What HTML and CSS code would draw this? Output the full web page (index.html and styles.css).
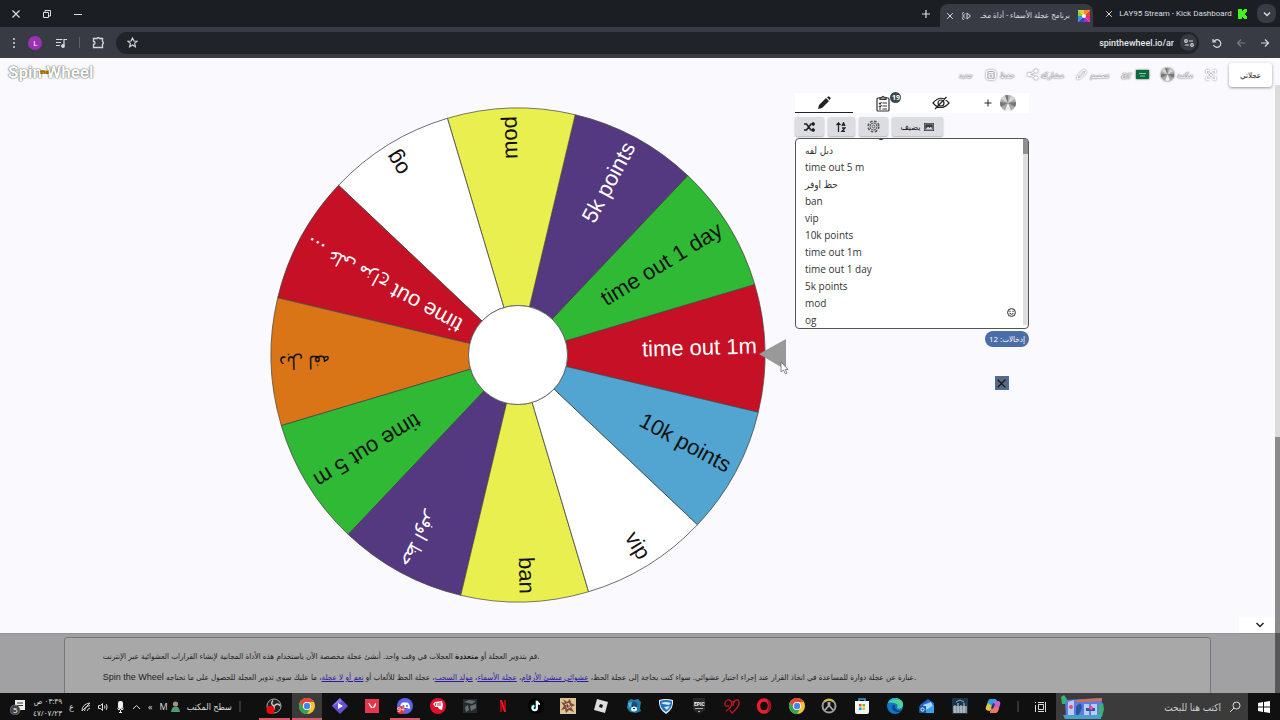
FILE: index.html
```html
<!DOCTYPE html>
<html lang="ar">

<head>
    <meta charset="UTF-8">
    <meta name="viewport" content="width=device-width, initial-scale=1.0">
    <title>برنامج عجلة الأسماء</title>
    <link rel="stylesheet" href="styles.css">
</head>

<body>
    <!-- Shared icons -->
    <svg class="defs" width="0" height="0" aria-hidden="true">
        <defs>
            <path id="slice" d="M47.8-12.8L238.6-63.9A247 247 0 0 1 238.6 63.9L47.8 12.8A49.5 49.5 0 0 0 47.8-12.8Z" />
            <symbol id="chrome" viewBox="0 0 20 20">
                <circle cx="10" cy="10" r="10" fill="#f9c32d" />
                <path d="M1.3 5A10 10 0 0 1 18.7 5H10A5 5 0 0 0 5.7 12.5Z" fill="#e4453a" />
                <path d="M1.3 5A10 10 0 0 0 10 20L14.3 12.5A5 5 0 0 1 5.7 12.5Z" fill="#35a354" />
                <circle cx="10" cy="10" r="5" fill="#fff" />
                <circle cx="10" cy="10" r="4" fill="#4285f4" />
            </symbol>
            <symbol id="ball" viewBox="0 0 16 16">
                <circle cx="8" cy="8" r="8" fill="#aaa" />
                <path d="M8 8L1 4A8 8 0 0 1 5 .6ZM8 8L11 .6A8 8 0 0 1 15 4Z" fill="#d5d5d5" />
                <path d="M8 8L1 12A8 8 0 0 1 0 7ZM8 8L16 7A8 8 0 0 1 15 12Z" fill="#777" />
                <path d="M8 8L5 15.4A8 8 0 0 0 11 15.4Z" fill="#eee" />
                <path d="M8 8L5 .6A8 8 0 0 1 8 0Z" fill="#777" />
            </symbol>
            <symbol id="close" viewBox="0 0 10 10">
                <path d="M1.5 1.5L8.5 8.5M8.5 1.5L1.5 8.5" fill="none" stroke="currentColor" stroke-width="1.2" />
            </symbol>
        </defs>
    </svg>

    <div class="tab-strip">
        <div class="window-controls">
            <button aria-label="إغلاق"><svg width="10" height="10"><use href="#close" /></svg></button>
            <button aria-label="استعادة"><svg width="10" height="10" fill="none" stroke="currentColor"><path d="M1.5 3.5H6.5V8.5H1.5ZM3 3V1.5H8.5V7H7" /></svg></button>
            <button aria-label="تصغير"><svg width="10" height="10" stroke="currentColor"><path d="M1 5.5H9" /></svg></button>
        </div>
        <button class="new-tab" aria-label="علامة تبويب جديدة"><svg width="10" height="10" stroke="currentColor" stroke-width="1.2"><path d="M5 1V9M1 5H9" /></svg></button>
        <div class="tab active">
            <svg width="8" height="8"><use href="#close" /></svg>
            <svg width="10" height="10" viewBox="0 0 10 10" fill="none" stroke="currentColor"><path d="M5 2V8L8.5 5ZM3 2.5A3 3 0 0 0 3 7.5M1.7 1A5 5 0 0 0 1.7 9" /></svg>
            <span class="tab-title" dir="rtl">برنامج عجلة الأسماء - أداة مخـ</span>
            <svg width="12" height="12" viewBox="0 0 12 12">
                <path d="M0 0H12V12H0Z" fill="#fff" />
                <path d="M6 6L6 0H0Z" fill="#f0cf30" /><path d="M6 6L0 0V6Z" fill="#8fce38" /><path d="M6 6H0V12Z" fill="#2b9be0" /><path d="M6 6L0 12H6Z" fill="#4040c0" />
                <path d="M6 6V12H12Z" fill="#a52cc5" /><path d="M6 6L12 12V6Z" fill="#ea2886" /><path d="M6 6H12V0Z" fill="#ee3b30" /><path d="M6 6L12 0H6Z" fill="#f28b27" />
                <circle cx="6" cy="6" r="2" fill="#fff" />
            </svg>
        </div>
        <div class="tab">
            <svg width="8" height="8"><use href="#close" /></svg>
            <span class="tab-title">LAY95 Stream - Kick Dashboard</span>
            <svg width="9" height="10" viewBox="0 0 9 10"><path d="M0 0H4V2H5V1H6V0H9V3H8V4H7V6H8V7H9V10H6V9H5V8H4V10H0Z" fill="#40f51d" /></svg>
        </div>
        <button class="tab-search" aria-label="البحث في علامات التبويب"><svg width="8" height="8" fill="none" stroke="currentColor" stroke-width="1.4"><path d="M1 2.5L4 5.5L7 2.5" /></svg></button>
    </div>

    <div class="toolbar">
        <div class="toolbar-icons">
            <button aria-label="المزيد"><svg width="4" height="12" fill="currentColor"><circle cx="2" cy="2" r="1" /><circle cx="2" cy="6" r="1" /><circle cx="2" cy="10" r="1" /></svg></button>
            <button class="profile">L</button>
            <button aria-label="الوسائط"><svg width="12" height="10" fill="none" stroke="currentColor" stroke-width="1.2"><path d="M1 1.5H7.5M1 4.5H6M1 7.5H5M9 7.5V1.5H12" /><circle cx="8" cy="8" r="1.3" fill="currentColor" /></svg></button>
            <span class="divider"></span>
            <button aria-label="الإضافات"><svg width="13" height="13" fill="none" stroke="currentColor" stroke-width="1.3"><path d="M1.5 2.5H5A1.3 1.3 0 0 1 7.5 2.5H10.5V5.5A1.3 1.3 0 0 1 10.5 8V11.5H1.5V8.5A1.5 1.5 0 0 0 1.5 5.5Z" /></svg></button>
        </div>
        <div class="address-bar">
            <svg width="11" height="11" viewBox="0 0 12 12" fill="none" stroke="currentColor" stroke-width="1.2"><path d="M6 1L7.5 4.4L11 4.7L8.3 7L9.2 10.7L6 8.7L2.8 10.7L3.7 7L1 4.7L4.5 4.4Z" /></svg>
            <input type="text" value="spinthewheel.io/ar" aria-label="العنوان">
            <span class="site-info"><svg width="10" height="8" fill="none" stroke="currentColor" stroke-width="1.2"><circle cx="2" cy="2" r="1.3" /><circle cx="8" cy="6" r="1.3" /><path d="M5 2H9M1 6H5" /></svg></span>
        </div>
        <div class="nav-buttons">
            <button aria-label="إعادة التحميل"><svg width="10" height="10" fill="none" stroke="currentColor" stroke-width="1.2"><path d="M1 1V4H4M1.5 4A3.8 3.8 0 1 1 1.5 7" /></svg></button>
            <button class="dim" aria-label="للأمام"><svg width="10" height="10" fill="none" stroke="currentColor" stroke-width="1.2"><path d="M9 5H1.5M5 1.5L1.5 5L5 8.5" /></svg></button>
            <button aria-label="رجوع"><svg width="10" height="10" fill="none" stroke="currentColor" stroke-width="1.2"><path d="M1 5H8.5M5 1.5L8.5 5L5 8.5" /></svg></button>
        </div>
    </div>

    <div class="viewport">
        <main class="page">
            <section class="stage">
                <header class="site-header">
                    <a class="logo" href="#">Spin Wheel<span class="logo-the">the</span></a>
                    <nav class="site-nav">
                        <a href="#">جديد</a>
                        <a href="#"><svg width="12" height="12" fill="none" stroke="currentColor"><rect x="1.5" y="1.5" width="9" height="9" rx="2" /><circle cx="6" cy="7" r="2" /><path d="M4 3.5H8" /></svg>حفظ</a>
                        <a href="#"><svg width="11" height="11" fill="currentColor" stroke="currentColor"><path d="M9 2L2 5.5L9 9" fill="none" /><circle cx="9" cy="2" r="1.3" /><circle cx="2" cy="5.5" r="1.3" /><circle cx="9" cy="9" r="1.3" /></svg>مشاركة</a>
                        <a href="#"><svg width="11" height="11" fill="none" stroke="currentColor"><path d="M1 10L2 6.5L7 1.5Q9 .5 10 2.5L9 4.5L4.5 9Z" /></svg>تصميم</a>
                        <a class="lang" href="#">ar<svg width="13" height="9"><path d="M0 0H13V9H0Z" fill="#0b6b3c" /><path d="M3 3.5H10M4 6H9" stroke="#8cc3a5" /></svg></a>
                        <a href="#"><svg width="13" height="13"><use href="#ball" /></svg>مكتبة</a>
                        <a href="#" aria-label="ملء الشاشة"><svg width="12" height="12" fill="none" stroke="currentColor"><path d="M1.5 4V1.5H4M8 1.5H10.5V4M10.5 8V10.5H8M4 10.5H1.5V8M4 4L8 8M8 4L4 8" /></svg></a>
                        <button class="my-wheels">عجلاتي</button>
                    </nav>
                </header>

                <div class="wheel-area">
                    <svg class="wheel" width="520" height="496" viewBox="-248 -248 520 496" role="img" aria-label="عجلة">
                        <g stroke="#444" stroke-width="0.7">
                            <use href="#slice" transform="rotate(-1.6)" fill="#c51025" />
                            <use href="#slice" transform="rotate(-31.6)" fill="#30b935" />
                            <use href="#slice" transform="rotate(-61.6)" fill="#543880" />
                            <use href="#slice" transform="rotate(-91.6)" fill="#e8ef4f" />
                            <use href="#slice" transform="rotate(-121.6)" fill="#fff" />
                            <use href="#slice" transform="rotate(-151.6)" fill="#c51025" />
                            <use href="#slice" transform="rotate(-181.6)" fill="#da7517" />
                            <use href="#slice" transform="rotate(-211.6)" fill="#30b935" />
                            <use href="#slice" transform="rotate(-241.6)" fill="#543880" />
                            <use href="#slice" transform="rotate(-271.6)" fill="#e8ef4f" />
                            <use href="#slice" transform="rotate(-301.6)" fill="#fff" />
                            <use href="#slice" transform="rotate(-331.6)" fill="#52a5d0" />
                            <circle r="49.5" fill="#fff" />
                        </g>
                        <g class="labels">
                            <text class="light" x="239" y="5" transform="rotate(-1.6)">time out 1m</text>
                            <text x="239" y="5" transform="rotate(-31.6)">time out 1 day</text>
                            <text class="light" x="239" y="5" transform="rotate(-61.6)">5k points</text>
                            <text x="239" y="5" transform="rotate(-91.6)">mod</text>
                            <text x="239" y="5" transform="rotate(-121.6)">og</text>
                            <text class="light" x="239" y="5" transform="rotate(-151.6)">time out <tspan class="arabic">على مزاج</tspan> ...</text>
                            <text class="arabic" x="239" y="5" transform="rotate(-181.6)">دبل لفه</text>
                            <text x="239" y="5" transform="rotate(-211.6)">time out 5 m</text>
                            <text class="light arabic" x="239" y="5" transform="rotate(-241.6)">حظ اوفر</text>
                            <text x="239" y="5" transform="rotate(-271.6)">ban</text>
                            <text x="239" y="5" transform="rotate(-301.6)">vip</text>
                            <text x="239" y="5" transform="rotate(-331.6)">10k points</text>
                        </g>
                        <path d="M241-1L268-16V15Z" fill="#999" />
                        <path d="M263 7V17L265.5 15L267.5 19L269 18L267.3 14.5H270Z" fill="#fff" stroke="#555" stroke-width="0.7" />
                    </svg>

                    <aside class="panel">
                        <div class="panel-tabs">
                            <button class="selected" aria-label="تعديل"><svg width="14" height="14" viewBox="0 0 14 14"><path d="M1 13L2 9L9 2L12 5L5 12ZM10 1.3L11 .6Q12 0 13.3 1.3Q14 2.5 13 3.4L12.5 4Z" fill="#222" /></svg></button>
                            <button aria-label="النتائج"><svg width="14" height="17" viewBox="0 0 14 17" fill="none" stroke="#333" stroke-width="1.2"><rect x="1" y="3" width="12" height="13" rx="1" /><path d="M4 4.5V2.5H5.5Q7 0 8.5 2.5H10V4.5ZM3 8L4 9L5.5 7M6.5 8H11M3 11L4 12L5.5 10M6.5 11H11M3 14H5M6.5 14H11" /></svg><span class="count">19</span></button>
                            <button aria-label="إخفاء"><svg width="18" height="14" viewBox="0 0 18 14" fill="none" stroke="#222" stroke-width="1.2"><path d="M1 7Q9-2.5 17 7Q9 16 1 7ZM3 13L14.5 1" /><circle cx="9" cy="7" r="3" /></svg></button>
                            <button class="add" aria-label="إضافة"><svg width="8" height="8" stroke="#222"><path d="M4 .5V7.5M.5 4H7.5" /></svg><svg width="16" height="16"><use href="#ball" /></svg></button>
                        </div>
                        <div class="tools">
                            <button aria-label="خلط"><svg width="11" height="10" viewBox="0 0 11 10" fill="none" stroke="#222" stroke-width="1.6"><path d="M0 2H2.5L7 8H10M0 8H2.5L7 2H10M8.5 .3L10.3 2L8.5 3.7M8.5 6.3L10.3 8L8.5 9.7" /></svg></button>
                            <button class="narrow" aria-label="ترتيب"><svg width="10" height="10" viewBox="0 0 10 10" fill="none" stroke="#222" stroke-width="1.3"><path d="M2.5 10V1M.5 3L2.5 1L4.5 3M6 4L7.5 .8L9 4M6.3 3H8.7M6 6H9L6 9.3H9" /></svg></button>
                            <button aria-label="إعدادات"><svg width="13" height="13" viewBox="0 0 13 13" fill="none" stroke="#555" stroke-width="0.9"><circle cx="6.5" cy="6.5" r="1.5" /><circle cx="6.5" cy="6.5" r="3.5" /><circle cx="6.5" cy="6.5" r="5.3" stroke-width="1.6" stroke-dasharray="2.6 1.56" /></svg></button>
                            <button class="wide">يضيف<svg width="10" height="8"><path d="M0 0H10V8H0Z" fill="#333" /><path d="M1.5 6.5L4 3.5L5.5 5L7 3.5L8.5 6.5Z" fill="#ddd" /><path d="M1 1H9V7H1Z" fill="none" stroke="#ddd" stroke-width="0.5" /></svg></button>
                        </div>
                        <div class="entries-box">
                            <textarea id="entries" dir="ltr" aria-label="إدخالات" spellcheck="false">time out على مزاج ستريمر
دبل لفه
time out 5 m
حظ اوفر
ban
vip
10k points
time out 1m
time out 1 day
5k points
mod
og</textarea>
                            <span class="entries-scroll"></span>
                            <button class="emoji" aria-label="رموز"><svg width="9" height="9" viewBox="0 0 9 9" fill="none" stroke="#222"><circle cx="4.5" cy="4.5" r="3.9" /><path d="M2.5 5.2Q4.5 7.5 6.5 5.2M3 2.7V4M6 2.7V4" /></svg></button>
                        </div>
                        <span class="entries-count" dir="rtl">إدخالات: 12</span>
                        <button class="dismiss" aria-label="إغلاق"><svg width="11" height="11"><use href="#close" /></svg></button>
                    </aside>
                </div>
                <button class="collapse" aria-label="طي"><svg width="10" height="8" fill="none" stroke="#222" stroke-width="1.5"><path d="M1.5 2L5 5.5L8.5 2" /></svg></button>
            </section>

            <section class="about">
                <div class="about-box" dir="ltr">
                    <p>قم بتدوير العجلة أو <b>متعددة</b> العجلات في وقت واحد. أنشئ عجلة مخصصة الآن باستخدام هذه الأداة المجانية لإنشاء القرارات العشوائية عبر الإنترنت.</p>
                    <p><span class="brand">Spin the Wheel</span> عبارة عن عجلة دوارة للمساعدة في اتخاذ القرار عند إجراء اختيار عشوائي. سواء كنت بحاجة إلى عجلة الحظ، <a href="#">عشوائي منشئ الأرقام</a>، <a href="#">عجلة الأسماء</a>، <a href="#">مولد السحب</a>، عجلة الحظ للألعاب أو <a href="#">نعم أو لا عجلة</a>، ما عليك سوى تدوير العجلة للحصول على ما تحتاجه.</p>
                </div>
            </section>
        </main>
        <div class="page-scroll"><span class="track"></span><span class="thumb"></span><span class="thumb-shade"></span></div>
    </div>

    <footer class="taskbar">
        <div class="tray">
            <span class="notice"><svg width="16" height="16" viewBox="0 0 16 16"><path d="M5 1H15V11H9L6 14V11H5Z" fill="#eee" /><path d="M7 4H13M7 6.5H13" stroke="#333" /><circle cx="5" cy="11" r="5" fill="#444" stroke="#888" stroke-width="0.6" /><text x="3" y="14" class="notice-count">5</text></svg></span>
            <time class="clock" dir="rtl"><span>٠٣:٣٩ ص</span><span>٤٧/٠٧/٢٣</span></time>
            <span class="keyboard">ع</span>
            <svg width="10" height="10" fill="none" stroke="#ccc"><path d="M1 9Q1 2 9 1M3.5 9Q4 4.5 9 3.5M6 9Q6.5 7 9 6M1 9L9 1" /></svg>
            <svg width="11" height="10" fill="none" stroke="#ddd"><path d="M.5 3.5H2.5L4.5 1.5V8.5L2.5 6.5H.5ZM6.5 3.5Q7.5 5 6.5 6.5M8.3 2.2Q10 5 8.3 7.8" /></svg>
            <svg width="9" height="12" fill="#eee"><rect x="2" y="0" width="5" height="8" rx="2" /><path d="M1 6V8H4V11H3V12H6V11H5V8H8V6L7 9H2Z" /></svg>
            <svg width="9" height="6" fill="none" stroke="#ddd"><path d="M1 5L4.5 1.5L8 5" /></svg>
            <span class="more">«</span>
            <span class="user">M<svg width="9" height="12"><circle cx="4.5" cy="3" r="2.6" fill="#a99380" /><path d="M0 11Q1 5 4.5 6Q8 5 9 11Z" fill="#4d9c76" /></svg></span>
            <span class="desktop">سطح المكتب</span>
            <span class="bar"></span>
        </div>
        <div class="apps">
            <span class="running"><svg viewBox="0 0 16 16"><circle cx="8" cy="8" r="7" fill="#222" stroke="#aaa" /><path d="M8 8Q4 6 7 2.5M8 8Q12 4 14 8M8 8Q9 12 5 13" fill="none" stroke="#ccc" stroke-width="1.5" /><circle cx="4.5" cy="12" r="4" fill="#f00808" /></svg></span>
            <span class="running current"><svg><use href="#chrome" /></svg></span>
            <span><svg viewBox="0 0 16 16"><path d="M8 0L16 8L8 16L0 8Z" fill="#6351dc" /><path d="M0 8L8 0L10 4Z" fill="#897af5" /><path d="M6 5L11 8L6 11Z" fill="#fff" /></svg></span>
            <span><svg viewBox="0 0 16 16"><path d="M1 1H15V15H1Z" fill="#e9364d" /><path d="M4 5L7 10H9L5 5ZM12 5V7L10 10H8.5L11.5 5Z" fill="#fff" /></svg></span>
            <span class="running"><svg viewBox="0 0 16 16"><circle cx="8" cy="8" r="8" fill="#5865e8" /><path d="M3 11Q3 5 6 4.5H10Q13 5 13 11L10 10H6Z" fill="#fff" /><circle cx="6.5" cy="8" r="1" fill="#5865e8" /><circle cx="10" cy="8" r="1" fill="#5865e8" /><circle cx="4" cy="12" r="4" fill="#e33b45" /><text x="0" y="14" class="app-count">9+</text></svg></span>
            <span><svg viewBox="0 0 16 16"><circle cx="8" cy="8" r="8" fill="#e00d2d" /><path d="M3 6L5 4L12 3L13 7L12 12L9 11L8 9L5 9Z" fill="#fff" /><path d="M6 5L5 8M8 5V8M10 4.5V8" stroke="#e00d2d" /></svg></span>
            <span><svg viewBox="0 0 16 16"><path d="M1 1H15V15H1Z" fill="#252b2d" /><path d="M2 4L7 2L14 3L10 6ZM8 8L14 6V10L9 13ZM3 9L6 7L7 12L4 14Z" fill="#627073" /></svg></span>
            <span><svg viewBox="0 0 16 16"><path d="M5 2H7V14H5ZM9 2H11V14H9Z" fill="#a80712" /><path d="M5 2H7L11 14H9Z" fill="#ef1724" /></svg></span>
            <span><svg viewBox="0 0 16 16"><circle cx="8" cy="8" r="8" fill="#000" /><path d="M8.5 2.5V9.5A2.2 2.2 0 1 1 6 7.5" fill="none" stroke="#20d5dd" stroke-width="2" /><path d="M9 3V10A2.2 2.2 0 1 1 6.5 8M9 3Q10 6 12 6" fill="none" stroke="#fff" stroke-width="1.8" /></svg></span>
            <span><svg viewBox="0 0 16 16"><path d="M0 0H16V16H0Z" fill="#dac49c" /><path d="M3 1L7 4L10 1L11 5L15 7L11 9L14 14L9 12L6 15L5 11L1 12L4 8L1 4L5 5Z" fill="#834b30" /><path d="M5 6L9 5L11 9L7 11Z" fill="#e8cfb1" /><path d="M7 6L8 10M5 8H10" stroke="#533" /></svg></span>
            <span><svg viewBox="0 0 16 16"><path d="M4 1L15 4L12 15L1 12Z" fill="#ddd" /><path d="M7 6L10 7L9 10L6 9Z" fill="#111" /></svg></span>
            <span><svg viewBox="0 0 16 16"><path d="M2 3L5 1L8 2L12 1L15 4L14 10L15 13L10 15L4 14L1 10Z" fill="#217da8" /><path d="M5 5L8 3L12 6L10 10H6Z" fill="#194e75" /><path d="M2 5L6 4L5 9L3 10Z" fill="#4fb2da" /><ellipse cx="8" cy="11" rx="3" ry="2.5" fill="#e5f0f3" /><path d="M7 10.5H9M6 8H7M9.5 8H10.5" stroke="#123" stroke-width="1.2" /></svg></span>
            <span><svg viewBox="0 0 16 16"><path d="M1 2Q8 0 15 2Q16 11 8 16Q0 11 1 2Z" fill="#e8f2fa" /><path d="M2 3Q8 1 14 3Q15 10 8 14Q1 10 2 3Z" fill="#1e73bc" /><path d="M3 5Q8 3 13 5L11 7L5 6ZM6 9L12 8L9 12Z" fill="#d5eaf9" /></svg></span>
            <span><svg viewBox="0 0 16 16"><path d="M2 0H14V12L8 16L2 12Z" fill="#282828" /><text x="3" y="8" class="epic">EPIC</text><path d="M4 10.5H12M7 13.5H9" stroke="#bbb" stroke-width="0.9" /></svg></span>
            <span><svg viewBox="0 0 16 16" fill="none" stroke="#c71526" stroke-width="1.3"><path d="M2 13Q10 8 7 3Q3 0 1 5Q0 9 5 8M9 8Q10 1 14 2Q18 7 8 15L6 12M8 4L10 3" /></svg></span>
            <span><svg viewBox="0 0 16 16"><ellipse cx="8" cy="8" rx="5.5" ry="6" fill="none" stroke="#ed1c2f" stroke-width="3.5" /><path d="M11 1Q16 4 15 9Q14 13 11 15Q14 8 11 1" fill="#9e1020" /></svg></span>
            <span><svg><use href="#chrome" /></svg></span>
            <span><svg viewBox="0 0 16 16" fill="none"><circle cx="8" cy="8" r="6.5" stroke="#9a9a9a" stroke-width="2" /><path d="M3.5 3.5A6.5 6.5 0 0 1 12.5 3.5" stroke="#d7b53d" stroke-width="2" /><path d="M4 12L7.5 8V4M12 12L8.5 8V4" stroke="#aaa" stroke-width="1.8" /></svg></span>
            <span><svg viewBox="0 0 16 16"><path d="M5 4V1H11V4" fill="none" stroke="#36a3dd" stroke-width="1.5" /><path d="M1 3H15V14Q15 16 13 16H3Q1 16 1 14Z" fill="#f5f5f5" /><path d="M5 6H7.5V8.5H5Z" fill="#ee5125" /><path d="M8.5 6H11V8.5H8.5Z" fill="#7eb900" /><path d="M5 9.5H7.5V12H5Z" fill="#00a3ee" /><path d="M8.5 9.5H11V12H8.5Z" fill="#ffb800" /></svg></span>
            <span><svg viewBox="0 0 16 16"><circle cx="8" cy="8" r="8" fill="#1474c8" /><path d="M1 5Q4-1 10 .3Q17 2 16 8Q14 12 10 10Q12 6 7 5Q3 4 1 5Z" fill="#4bd59a" /><path d="M1 5Q4-1 10 .3Q12 1 13 2Q5 1 1 5Z" fill="#2fb5dc" /><path d="M6 7Q3 14 13 14L15 12Q11 14 8.5 11Q7 9 8 7Z" fill="#0c3e7a" /></svg></span>
            <span><svg viewBox="0 0 16 16"><path d="M1 7L9 1L15 5V15H2Z" fill="#2a63cf" /><path d="M4 7L12 4L14 8L7 13Z" fill="#a4d8fa" /><path d="M2 15L15 7V15Z" fill="#39a1f2" /><rect x="0" y="8" width="7" height="7" rx="1" fill="#1756ac" /><circle cx="3.5" cy="11.5" r="1.6" fill="none" stroke="#fff" /></svg></span>
            <span><svg viewBox="0 0 16 16"><path d="M0 0H16V16H0Z" fill="#16354b" /><path d="M1 8H15V15H1Z" fill="#8a9498" /><path d="M3 7V15M6 5V15M9 7V15M12 5V15" stroke="#cfd5d6" /><path d="M4 4L8 2L12 4" stroke="#93a9b5" fill="none" /></svg></span>
            <span><svg viewBox="0 0 16 16"><path d="M5 1H10Q12 1 12 4L9 12Q8 13 5 12H2Q0 12 1 9L3 3Q4 1 5 1Z" fill="#29a2e8" /><path d="M1 9L3 5L7 8L5 13Q0 13 1 9Z" fill="#edc332" /><path d="M11 3H14Q16 4 15 7L13 13Q12 15 10 15H6Q4 15 6 12L8 6Q9 3 11 3Z" fill="#c85ed3" /><path d="M6 12L8 9L14 10L13 13Q12 15 10 15H6Q4 15 6 12Z" fill="#f27853" /><path d="M8 5L10 6L8 11L6 10Z" fill="#173768" /></svg></span>
        </div>
        <div class="start-area">
            <span class="bar"></span>
            <button class="task-view" aria-label="عرض المهام"><svg width="12" height="12" fill="none" stroke="#ddd"><path d="M4.5 3.5H9.5V8.5H4.5ZM4 1.5H10M4 10.5H10M1.5 1V2M1.5 4V11M11.5 1V11" /></svg></button>
            <div class="search">
                <svg width="44" height="24" viewBox="0 0 44 24"><path d="M4 5L41 3V8L38 22H5Z" fill="#5c7be5" /><path d="M14 5L41 3L40 6L16 7Z" fill="#d9713f" /><path d="M7 7L13 5V22H7ZM23 9H28V22H23ZM30 9H36V22H30Z" fill="#b7cdf8" /><path d="M15 12Q20 5 21 12Q20 18 15 22ZM25 13H34V16H25Z" fill="#29589f" /><path d="M0 2L3 0L6 4L4 9H1ZM38 10L42 8L43 14L41 22H37Z" fill="#3faf78" /><path d="M2 20H40V24H4Z" fill="#4ba0cb" /><circle cx="10" cy="12" r="2" fill="#ed4b66" /><circle cx="30" cy="13" r="2" fill="#ef4c7c" /></svg>
                <input type="search" dir="rtl" placeholder="اكتب هنا للبحث" aria-label="بحث">
                <svg width="12" height="12" fill="none" stroke="#ddd"><circle cx="7.5" cy="4.5" r="3.5" /><path d="M5 7L1 11" /></svg>
            </div>
            <button class="start" aria-label="ابدأ"><svg width="12" height="12" fill="#fff"><path d="M0 2L5 1V5.5H0ZM6 1L12 0V5.5H6ZM0 6.5H5V11L0 10ZM6 6.5H12V12L6 11Z" /></svg></button>
        </div>
    </footer>

    <script>
        const entries = document.getElementById('entries');
        entries.scrollTop = 18;
    </script>
</body>

</html>
```
FILE: styles.css
```css
* {
    margin: 0;
    padding: 0;
    box-sizing: border-box;
}

body {
    display: flex;
    flex-direction: column;
    height: 100vh;
    overflow: hidden;
    font-family: "Open Sans", "DejaVu Sans Condensed", "DejaVu Sans", sans-serif;
    font-size: 9px;
    color: #222;
}

button {
    display: flex;
    align-items: center;
    justify-content: center;
    border: none;
    background: none;
    color: inherit;
    font: inherit;
    cursor: pointer;
}

input,
textarea {
    border: none;
    outline: none;
    background: none;
    color: inherit;
    font: inherit;
}

svg {
    flex: none;
}

.defs {
    position: absolute;
}

/* Browser window */
.tab-strip {
    display: flex;
    align-items: center;
    height: 27px;
    flex: none;
    padding-right: 4px;
    background: #1b1f23;
    color: #dcdee2;
}

.window-controls {
    display: flex;
    flex: 1;
}

.window-controls button {
    width: 31px;
    height: 27px;
}

.new-tab {
    width: 28px;
    height: 24px;
}

.tab {
    display: flex;
    align-items: center;
    justify-content: space-between;
    width: 160px;
    height: 23px;
    padding: 0 6px 0 12px;
    font-family: Roboto, "DejaVu Sans Condensed", sans-serif;
    font-size: 8px;
}

.tab.active {
    width: 153px;
    align-self: flex-end;
    padding: 0 3px 0 6px;
    border-radius: 8px 8px 0 0;
    background: #383b44;
}

.tab-title {
    white-space: nowrap;
}

.tab-search {
    width: 19px;
    height: 19px;
    margin-left: 4px;
    border-radius: 8px;
    background: #383b44;
}

.toolbar {
    display: flex;
    align-items: center;
    height: 31px;
    flex: none;
    background: #383b44;
    color: #d5d7db;
}

.toolbar-icons {
    display: flex;
    align-items: center;
    justify-content: space-between;
    width: 116px;
    padding: 0 11px 0 12px;
}

.profile {
    width: 14px;
    height: 14px;
    border-radius: 50%;
    background: #9c31b3;
    color: #fff;
    font-size: 8px;
}

.divider {
    width: 1px;
    height: 11px;
    background: #5c606a;
}

.address-bar {
    display: flex;
    align-items: center;
    flex: 1;
    gap: 6px;
    height: 22px;
    padding: 0 2px 0 11px;
    border-radius: 11px;
    background: #202428;
}

.address-bar input {
    flex: 1;
    text-align: right;
    color: #e3e5e8;
    font: 500 9px Roboto, sans-serif;
}

.site-info {
    display: flex;
    align-items: center;
    justify-content: center;
    width: 17px;
    height: 17px;
    border-radius: 50%;
    background: #383b40;
}

.nav-buttons {
    display: flex;
    justify-content: space-between;
    width: 81px;
    padding: 0 10px 0 13px;
}

.dim {
    color: #777b83;
}

/* Page */
.viewport {
    display: flex;
    flex: 1;
    min-height: 0;
}

.page {
    display: flex;
    flex-direction: column;
    flex: 1;
    min-width: 0;
}

.stage {
    position: relative;
    flex: 1;
    background: #fafafe;
}

.site-header {
    display: flex;
    align-items: center;
    justify-content: space-between;
    height: 33px;
    padding: 0 3px 0 8px;
}

.logo {
    position: relative;
    padding-bottom: 6px;
    color: #fff;
    font: bold 17px Roboto, sans-serif;
    text-decoration: none;
    text-shadow: 0 0 1px #444, 0 0 2px #777;
}

.logo-the {
    position: absolute;
    top: 8px;
    left: 32px;
    color: #6b5316;
    background: #e8b830;
    font-size: 6px;
    line-height: 4px;
    text-shadow: none;
}

.site-nav {
    display: flex;
    align-items: center;
    gap: 12px;
}

.site-nav a {
    display: flex;
    align-items: center;
    gap: 3px;
    color: #fff;
    font-size: 8px;
    text-decoration: none;
    text-shadow: 0 0 1px #444, 0 0 2px #666;
}

.site-nav a svg {
    filter: drop-shadow(0 0 1px #555);
}

.site-nav .lang {
    gap: 4px;
    font-size: 11px;
}

.my-wheels {
    width: 43px;
    height: 24px;
    border-radius: 3px;
    background: #fff;
    font-size: 8px;
    box-shadow: 0 1px 3px rgba(0, 0, 0, 0.4);
}

.wheel-area {
    display: flex;
    justify-content: flex-end;
    gap: 5px;
    padding-right: 19.3%;
}

.wheel {
    margin-top: 16px;
}

.labels text {
    font-family: "Liberation Sans", sans-serif;
    font-size: 22px;
    text-anchor: end;
    fill: #111;
}

.labels .light {
    fill: #fff;
}

.labels .arabic {
    font-family: "DejaVu Sans Condensed", "DejaVu Sans", sans-serif;
    font-size: 18px;
}

.panel {
    display: flex;
    flex-direction: column;
    width: 234px;
    padding-top: 2px;
}

.panel-tabs {
    display: grid;
    grid-template-columns: repeat(4, 1fr);
    height: 20px;
    background: #fff;
}

.panel-tabs button {
    position: relative;
}

.panel-tabs .selected {
    border-bottom: 1px solid #222;
}

.panel-tabs .add {
    gap: 8px;
}

.count {
    position: absolute;
    top: -1px;
    left: 37px;
    width: 11px;
    height: 11px;
    border-radius: 50%;
    background: #37474f;
    color: #fff;
    font-size: 7px;
    font-weight: bold;
    line-height: 11px;
}

.tools {
    display: flex;
    gap: 4px;
    margin: 4px 0 2px;
}

.tools button {
    width: 29px;
    height: 19px;
    border-radius: 2px;
    background: #dcdde2;
    box-shadow: 0 1px 2px rgba(0, 0, 0, 0.3);
}

.tools .narrow {
    width: 27px;
}

.tools .wide {
    gap: 4px;
    width: 51px;
    font-size: 9px;
}

.entries-box {
    position: relative;
    height: 191px;
    border: 1px solid #555;
    border-radius: 4px;
    background: #fff;
    overflow: hidden;
}

#entries {
    display: block;
    width: 100%;
    height: 100%;
    padding: 4px 9px 1px;
    overflow: hidden;
    resize: none;
    color: #333;
    font-size: 10px;
    line-height: 17px;
}

.entries-scroll {
    position: absolute;
    top: 0;
    right: 0;
    bottom: 3px;
    width: 5px;
    background: linear-gradient(#8f8f8f 15px, #dedede 15px);
}

.emoji {
    position: absolute;
    right: 12px;
    bottom: 11px;
}

.entries-count {
    align-self: flex-end;
    margin-top: 2px;
    padding: 0 4px;
    border-radius: 8px;
    background: #4a6da7;
    color: #fff;
    font-size: 8px;
    line-height: 16px;
}

.dismiss {
    align-self: flex-end;
    width: 14px;
    height: 14px;
    margin: 29px 20px 0 0;
    border: 1px solid #4a6da7;
    background: #596982;
    color: #111;
}

.collapse {
    position: absolute;
    right: 0;
    bottom: 0;
    width: 36px;
    height: 16px;
    padding-left: 5px;
    background: #fff;
}

.about {
    height: 60px;
    flex: none;
    padding: 3px 5% 0;
    overflow: hidden;
    background: #a1a1a4;
    border-top: 1px solid #939393;
}

.about-box {
    display: flex;
    flex-direction: column;
    gap: 6px;
    height: 80px;
    padding: 11px 38px;
    border: 1px solid #777;
    border-radius: 3px;
    background: #a8a8a8;
    font-family: "DejaVu Sans Condensed", "DejaVu Sans", sans-serif;
    font-size: 8px;
    line-height: 15px;
    white-space: nowrap;
}

.about-box a {
    color: #2b1aa0;
}

.brand {
    font-family: "Liberation Sans", sans-serif;
    font-size: 9px;
}

.page-scroll {
    display: flex;
    flex-direction: column;
    width: 5px;
    padding-top: 27px;
    background: #fafafe;
}

.track {
    flex: 352;
    background: #dcdcdc;
}

.thumb {
    flex: 196;
    background: #8b8b8b;
}

.thumb-shade {
    flex: 60;
    background: #575757;
}

/* Taskbar */
.taskbar {
    display: flex;
    align-items: stretch;
    height: 27px;
    flex: none;
    background: #101010;
    color: #ddd;
}

.tray {
    display: flex;
    align-items: center;
    justify-content: space-between;
    width: 259px;
    padding: 0 18px 0 10px;
    font-size: 8px;
}

.notice svg {
    display: block;
}

.notice-count {
    fill: #fff;
    font-size: 8px;
}

.clock {
    display: flex;
    flex-direction: column;
    font-size: 8px;
    line-height: 12px;
}

.keyboard,
.more,
.user,
.desktop {
    font-size: 9px;
}

.user {
    display: flex;
    align-items: center;
    gap: 3px;
}

.bar {
    width: 2px;
    height: 11px;
    background: #333;
}

.apps {
    display: flex;
    flex: 1;
    gap: 2px;
}

.apps span {
    display: flex;
    flex: 1;
    align-items: center;
    justify-content: center;
    border-bottom: 2px solid transparent;
}

.apps .running {
    border-bottom-color: #d75a68;
}

.apps .current {
    background: #3a3a3a;
}

.apps svg {
    width: 16px;
    height: 16px;
}

.app-count {
    fill: #fff;
    font-size: 7px;
}

.epic {
    fill: #fff;
    font: bold 5px Roboto, sans-serif;
}

.start-area {
    display: flex;
    align-items: center;
    width: 272px;
    padding-left: 9px;
}

.task-view {
    width: 37px;
    height: 27px;
    padding-left: 4px;
}

.search {
    display: flex;
    align-items: center;
    flex: 1;
    min-width: 0;
    height: 27px;
    padding: 0 7px 0 5px;
    background: #3b3b3b;
}

.search input {
    flex: 1;
    min-width: 0;
    padding-right: 8px;
    font-size: 10px;
}

.search input::placeholder {
    color: #d0d0d0;
}

.start {
    width: 32px;
    height: 27px;
}
```
